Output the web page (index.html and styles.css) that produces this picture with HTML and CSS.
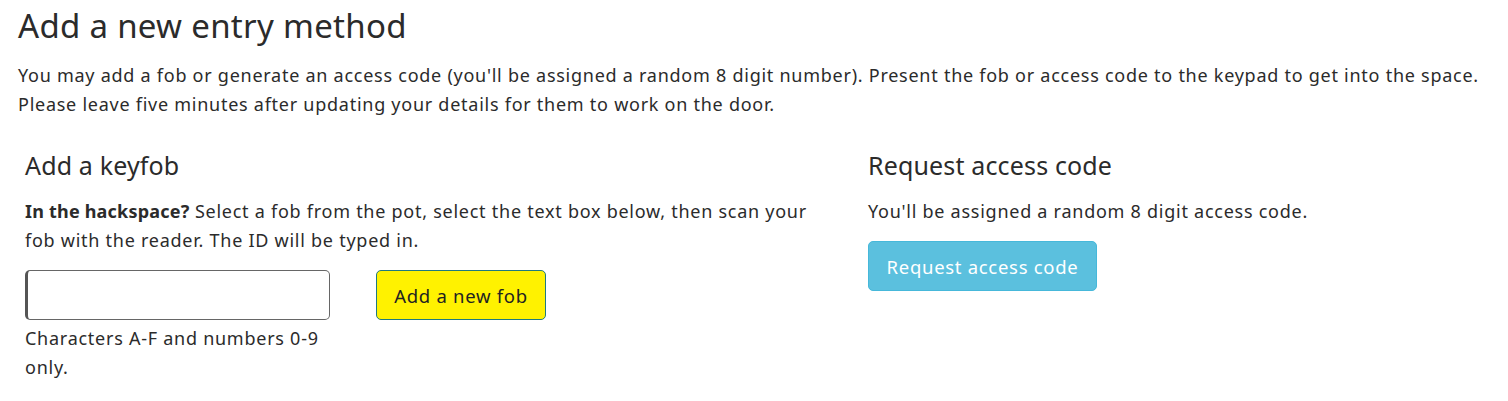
FILE: index.html
```html
<!DOCTYPE html>
<html lang="en">
<head>
<meta charset="utf-8">
<title>Add a new entry method</title>
<link rel="stylesheet" href="styles.css">
</head>
<body>
<main class="page">
  <h1 class="title">Add a new entry method</h1>
  <p class="intro">You may add a fob or generate an access code (you'll be assigned a random 8 digit number). Present the fob or access code to the keypad to get into the space.<br>Please leave five minutes after updating your details for them to work on the door.</p>
  <div class="columns">
    <section class="col col-fob">
      <h2 class="subtitle">Add a keyfob</h2>
      <p class="text"><strong>In the hackspace?</strong> Select a fob from the pot, select the text box below, then scan your fob with the reader. The ID will be typed in.</p>
      <form class="fob-form">
        <div class="field">
          <input class="fob-input" type="text" aria-label="Fob ID">
          <p class="help">Characters A-F and numbers 0-9 only.</p>
        </div>
        <button class="btn btn-yellow" type="button">Add a new fob</button>
      </form>
    </section>
    <section class="col col-code">
      <h2 class="subtitle">Request access code</h2>
      <p class="text">You'll be assigned a random 8 digit access code.</p>
      <button class="btn btn-info" type="button">Request access code</button>
    </section>
  </div>
</main>
</body>
</html>
```
FILE: styles.css
```css
* { box-sizing: border-box; }
html, body { margin: 0; padding: 0; background: #fff; }
body {
  font-family: "Noto Sans", "Open Sans", sans-serif;
  color: #2b2b2b;
  font-size: 18px;
  line-height: 29px;
  letter-spacing: 0.74px;
}
.page { padding: 5px 18px 0 18px; }
.title {
  font-size: 33px;
  font-weight: 400;
  line-height: 42px;
  letter-spacing: 0.3px;
  margin: 0 0 13.5px 0;
}
.intro { margin: 0 0 29px 0; }
.columns {
  display: grid;
  grid-template-columns: 818px 1fr;
  column-gap: 25px;
  padding-left: 7px;
}
.col-fob { padding-right: 20px; }
.subtitle {
  font-size: 25px;
  font-weight: 400;
  line-height: 34px;
  letter-spacing: 0.15px;
  margin: 0 0 15.5px 0;
}
.text { margin: 0 0 15px 0; }
.text strong { font-weight: 700; letter-spacing: 0.2px; }
.fob-form {
  display: flex;
  align-items: flex-start;
  gap: 46px;
}
.field { width: 305px; }
.fob-input {
  display: block;
  width: 305px;
  height: 50px;
  border: 1px solid #666;
  border-left: 3px solid #555;
  border-radius: 5px;
  background: #fff;
  margin: 0 0 3.5px 0;
}
.help { margin: 0; }
.btn {
  font-family: inherit;
  font-size: 18.5px;
  letter-spacing: 0.7px;
  border-radius: 5px;
  height: 50px;
  padding: 0;
  cursor: pointer;
}
.btn-yellow {
  background: #fff200;
  color: #222;
  border: 1px solid #1f7a80;
  width: 170px;
}
.btn-info {
  background: #5bc0de;
  color: #fff;
  border: 1px solid #46b8da;
  width: 229px;
}
```
